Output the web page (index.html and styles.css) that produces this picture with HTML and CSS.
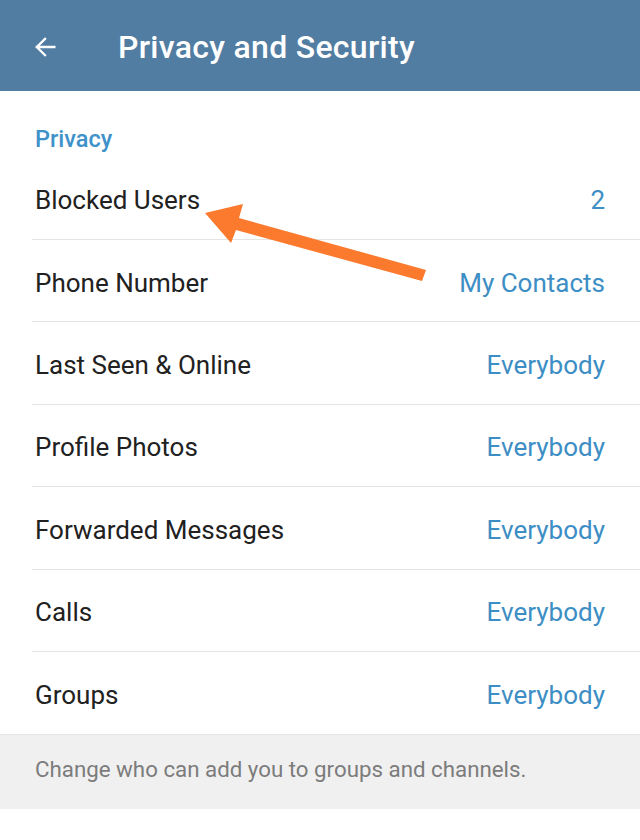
FILE: index.html
```html
<!DOCTYPE html>
<html>
<head>
<meta charset="utf-8">
<link rel="stylesheet" href="styles.css">
</head>
<body>
<div class="app">
  <header class="topbar">
    <svg class="back" width="28" height="28" viewBox="0 0 24 24"><path d="M20 12H5M12 5l-7 7 7 7" fill="none" stroke="#fff" stroke-width="2" stroke-linecap="square"/></svg>
    <h1 class="title">Privacy and Security</h1>
  </header>
  <section class="list">
    <div class="section-title">Privacy</div>
    <div class="row"><span class="label">Blocked Users</span><span class="value">2</span></div>
    <div class="row"><span class="label">Phone Number</span><span class="value">My Contacts</span></div>
    <div class="row"><span class="label">Last Seen &amp; Online</span><span class="value">Everybody</span></div>
    <div class="row"><span class="label">Profile Photos</span><span class="value">Everybody</span></div>
    <div class="row"><span class="label">Forwarded Messages</span><span class="value">Everybody</span></div>
    <div class="row"><span class="label">Calls</span><span class="value">Everybody</span></div>
    <div class="row last"><span class="label">Groups</span><span class="value">Everybody</span></div>
  </section>
  <div class="hint">Change who can add you to groups and channels.</div>
  <svg class="arrow" width="640" height="840" viewBox="0 0 640 840"><polygon points="205,213 243,204 239,218 426,270 422,281 236,230 231,243" fill="#fb7a2e"/></svg>
</div>
</body>
</html>
```
FILE: styles.css
```css
html, body { margin: 0; padding: 0; background: #fff; }
body { font-family: Roboto, "Noto Sans", sans-serif; }
.app { position: relative; width: 640px; height: 840px; overflow: hidden; background: #fff; }
.topbar { height: 91px; background: #517da2; display: flex; align-items: center; box-sizing: border-box; padding: 2px 0 0 31px; }
.back { display: block; flex: none; }
.title { margin: 0 0 0 59px; color: #fff; font-size: 32px; font-weight: 500; letter-spacing: 0.3px; }
.section-title { padding: 33px 0 0 35px; height: 66.6px; box-sizing: border-box; line-height: 30px; font-size: 23.5px; font-weight: 500; color: #3e92c9; }
.row { height: 82.4px; box-sizing: border-box; margin-left: 32px; padding: 4px 35px 0 3px; border-bottom: 1px solid #e4e4e4; display: flex; align-items: center; justify-content: space-between; font-size: 26px; }
.row.last { border-bottom: none; }
.label { color: #212121; }
.value { color: #3d8ec4; }
.hint { background: #f0f0f0; border-top: 1px solid #e6e6e6; height: 75px; box-sizing: border-box; padding: 0 0 6px 35px; display: flex; align-items: center; font-size: 22.3px; letter-spacing: 0; color: #7c7c7c; }
.arrow { position: absolute; left: 0; top: 0; pointer-events: none; }
```
